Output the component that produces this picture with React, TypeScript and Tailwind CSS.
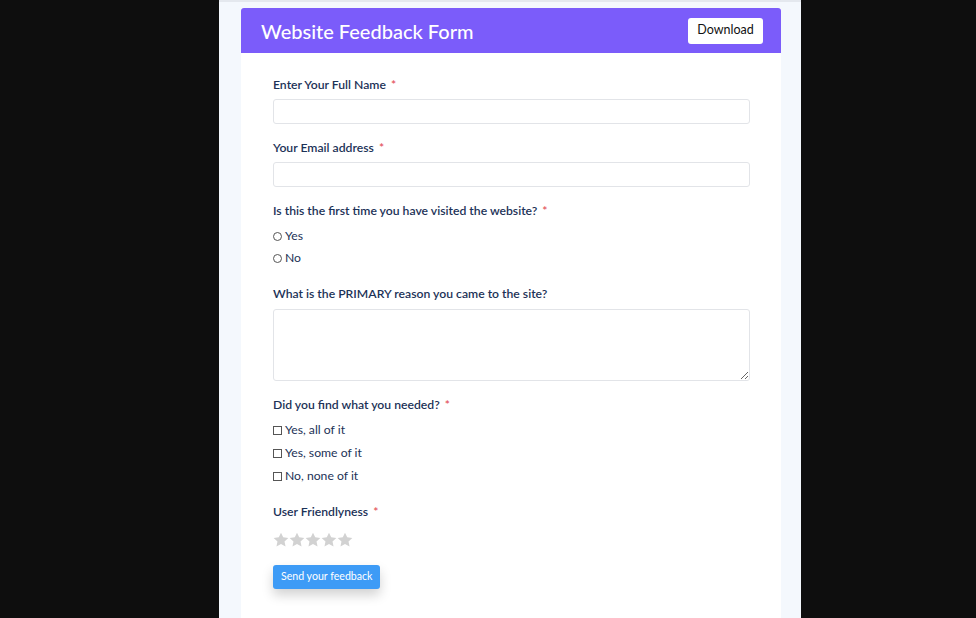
import React, { useState } from "react";

const font = { fontFamily: "Lato, 'Open Sans', sans-serif" };

const Req = () => <span className="ml-[5px] text-[#e3525a]">*</span>;

const Label = ({ text, req }: { text: string; req?: boolean }) => (
  <div className="text-[12.2px] font-semibold text-[#1c3257] leading-[20px]">
    {text}
    {req ? <Req /> : null}
  </div>
);

const Star = () => (
  <svg width="16" height="16" viewBox="0 0 24 24" className="fill-[#d2d2d2]">
    <path d="M12 1l3.3 7 7.7.9-5.7 5.3 1.5 7.6L12 18l-6.8 3.8 1.5-7.6L1 8.9 8.7 8z" />
  </svg>
);

export default function App() {
  const [rating, setRating] = useState(0);
  const [name, setName] = useState("");
  const [email, setEmail] = useState("");

  return (
    <div className="w-[976px] h-[618px] bg-[#0e0e0e] flex overflow-hidden" style={font}>
      <div className="ml-[219px] w-[582px] h-full bg-[#f4f8fd] border-t-2 border-[#e4e8ee] pl-[22px] pr-[20px] pt-[6px]">
        <div className="bg-white h-full flex flex-col">
          {/* header */}
          <div className="h-[45px] bg-[#7b5cfa] rounded-t-[3px] flex items-center justify-between pl-[20px] pr-[18px]">
            <h1 className="text-[20px] text-white font-medium">Website Feedback Form</h1>
            <button className="bg-white rounded-[3px] w-[75px] h-[26px] text-[12.5px] text-[#111]">Download</button>
          </div>

          <form className="pl-[32px] pr-[31px] pt-[22px] flex flex-col">
            {/* name */}
            <Label text="Enter Your Full Name" req />
            <input
              className="mt-[4px] h-[25px] border border-[#e2e4e8] rounded-[3px] outline-none px-2 text-[13px]"
              value={name}
              onChange={(e) => setName(e.target.value)}
            />

            <div className="mt-[14px]">
              <Label text="Your Email address" req />
            </div>
            <input
              className="mt-[4px] h-[25px] border border-[#e2e4e8] rounded-[3px] outline-none px-2 text-[13px]"
              value={email}
              onChange={(e) => setEmail(e.target.value)}
            />

            <div className="mt-[14px]">
              <Label text="Is this the first time you have visited the website?" req />
            </div>
            <div className="mt-[5px] flex flex-col gap-[2px] text-[12.2px] text-[#1c3257]">
              <label className="flex items-center h-[20px]">
                <span className="w-[9px] h-[9px] rounded-full border border-[#555] mr-[3px]" />
                Yes
              </label>
              <label className="flex items-center h-[20px]">
                <span className="w-[9px] h-[9px] rounded-full border border-[#555] mr-[3px]" />
                No
              </label>
            </div>

            <div className="mt-[16px]">
              <Label text="What is the PRIMARY reason you came to the site?" />
            </div>
            <textarea className="mt-[5px] h-[72px] border border-[#e2e4e8] rounded-[3px] outline-none px-2 text-[13px]" />

            <div className="mt-[14px]">
              <Label text="Did you find what you needed?" req />
            </div>
            <div className="mt-[5px] flex flex-col gap-[3px] text-[12.2px] text-[#1c3257]">
              {["Yes, all of it", "Yes, some of it", "No, none of it"].map((t) => (
                <label key={t} className="flex items-center h-[20px]">
                  <span className="w-[9px] h-[9px] border border-[#555] mr-[3px]" />
                  {t}
                </label>
              ))}
            </div>

            <div className="mt-[16px]">
              <Label text="User Friendlyness" req />
            </div>
            <div className="mt-[10px] flex gap-0">
              {[1, 2, 3, 4, 5].map((i) => (
                <span key={i} onClick={() => setRating(i)} className={rating >= i ? "opacity-60" : ""}>
                  <Star />
                </span>
              ))}
            </div>

            <div className="mt-[14px]">
              <button
                type="button"
                className="h-[24px] px-[8px] bg-[#3d9bf6] text-white text-[10.6px] rounded-[3px] shadow-[0_6px_12px_rgba(0,0,0,0.18)]"
              >
                Send your feedback
              </button>
            </div>
          </form>
        </div>
      </div>
    </div>
  );
}
